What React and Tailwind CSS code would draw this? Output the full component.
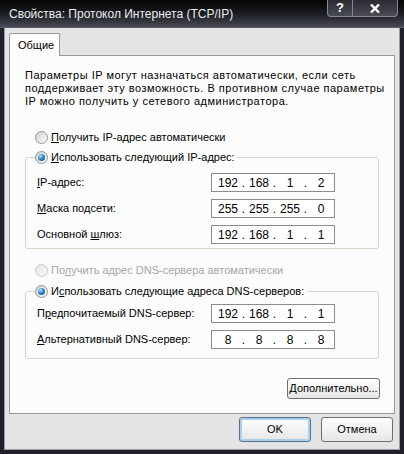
import React from 'react';

const Radio = ({ checked, disabled }) => (
  <span
    className={
      disabled
        ? 'w-[13px] h-[13px] shrink-0 rounded-full border border-[#c8c8c8] bg-linear-to-br from-[#e6e6e6] to-[#fbfbfb]'
        : 'w-[13px] h-[13px] shrink-0 rounded-full border border-[#8a949c] bg-linear-to-br from-[#cfcfcf] to-[#ffffff] flex items-center justify-center'
    }
  >
    {checked && (
      <span className="w-[7px] h-[7px] rounded-full bg-[radial-gradient(circle_at_35%_30%,#b5e2fb,#3b86c6_45%,#163f72)]" />
    )}
  </span>
);

const IpBox = ({ parts }) => (
  <div className="w-[124px] h-[19px] border border-[#8a8c8e] bg-white flex items-center pl-[3px] text-[12px] text-black">
    {parts.map((p, i) => (
      <React.Fragment key={i}>
        <span className="w-[26px] text-center">{p}</span>
        {i < 3 && <span className="w-[5px] text-center">.</span>}
      </React.Fragment>
    ))}
  </div>
);

const Row = ({ label, parts }) => (
  <div className="h-[19px] flex items-center">
    <span className="w-[185px] pl-[11px]">{label}</span>
    <IpBox parts={parts} />
  </div>
);

const Button = ({ children, focus, className }) => (
  <button
    className={
      (focus
        ? 'border border-[#5a6f86] shadow-[inset_0_0_0_2px_#a9d0ec] '
        : 'border border-[#707070] ') +
      'rounded-[3px] bg-linear-to-b from-[#fefefe] to-[#e6e6e6] text-black text-[11px] flex items-center justify-center ' +
      className
    }
  >
    {children}
  </button>
);

export default function App() {
  return (
    <div className="w-[404px] h-[454px] flex flex-col bg-[#1f2029] font-['Liberation_Sans',sans-serif] text-[11px] text-black overflow-hidden">
      {/* title bar */}
      <div className="h-[28px] shrink-0 relative flex items-center pl-[9px] bg-linear-to-b from-[#050505] via-[#1c1d22] to-[#474a53] border-b border-[#5b5e68]">
        <span className="text-[#ececec] text-[12px]">Свойства: Протокол Интернета (TCP/IP)</span>
        <div className="absolute right-[6px] top-0 flex h-[17px] border border-t-0 border-[#868995] rounded-b-[4px] bg-linear-to-b from-[#2a2b31] to-[#4a4c55] overflow-hidden">
          <span className="w-[25px] flex items-center justify-center text-white font-bold text-[13px] border-r border-[#868995]">?</span>
          <span className="w-[44px] flex items-center justify-center">
            <svg width="10" height="9" viewBox="0 0 10 9">
              <path d="M1 0.5 L9 8.5 M9 0.5 L1 8.5" stroke="#ffffff" strokeWidth="2.4" />
            </svg>
          </span>
        </div>
      </div>

      {/* body */}
      <div className="flex-1 mx-[4px] mb-[4px] bg-[#e4e4e4] flex flex-col px-[5px] pt-[5px] shadow-[inset_1px_0_0_#9a9ca4,inset_-1px_0_0_#9a9ca4,inset_0_-1px_0_#9a9ca4]">
        {/* tab */}
        <div className="flex">
          <div className="h-[23px] w-[51px] -mb-px relative z-10 bg-[#fcfcfc] border border-b-0 border-[#919b9c] rounded-t-[2px] flex items-center pl-[8px]">
            Общие
          </div>
        </div>

        {/* panel */}
        <div className="h-[359px] border border-[#919b9c] bg-[#fcfcfc] flex flex-col px-[15px]">
          <p className="mt-[13px] leading-[13px] whitespace-nowrap tracking-[0.5px]">
            Параметры IP могут назначаться автоматически, если сеть
            <br />
            поддерживает эту возможность. В противном случае параметры
            <br />
            IP можно получить у сетевого администратора.
          </p>

          <div className="mt-[21px] h-[16px] flex items-center gap-[3px] pl-[10px]">
            <Radio />
            <span>
              <u>П</u>олучить IP-адрес автоматически
            </span>
          </div>

          <fieldset className="mt-[4px] border border-[#d5d5c8] rounded-[3px] pb-[4px]">
            <legend className="ml-[9px] pr-[3px] h-[16px] flex items-center gap-[3px]">
              <Radio checked />
              <span>
                <u>И</u>спользовать следующий IP-адрес:
              </span>
            </legend>
            <div className="flex flex-col gap-[7px] pt-[8px]">
              <Row label={<><u>I</u>P-адрес:</>} parts={['192', '168', '1', '2']} />
              <Row label={<><u>М</u>аска подсети:</>} parts={['255', '255', '255', '0']} />
              <Row label={<>Основной <u>ш</u>люз:</>} parts={['192', '168', '1', '1']} />
            </div>
          </fieldset>

          <div className="mt-[13px] h-[16px] flex items-center gap-[3px] pl-[10px] text-[#a7a7a7]">
            <Radio disabled />
            <span>
              По<u>л</u>учить адрес DNS-сервера автоматически
            </span>
          </div>

          <fieldset className="mt-[5px] border border-[#d5d5c8] rounded-[3px] pb-[9px]">
            <legend className="ml-[9px] pr-[3px] h-[16px] flex items-center gap-[3px]">
              <Radio checked />
              <span>
                И<u>с</u>пользовать следующие адреса DNS-серверов:
              </span>
            </legend>
            <div className="flex flex-col gap-[7px] pt-[5px]">
              <Row label={<>П<u>р</u>едпочитаемый DNS-сервер:</>} parts={['192', '168', '1', '1']} />
              <Row label={<><u>А</u>льтернативный DNS-сервер:</>} parts={['8', '8', '8', '8']} />
            </div>
          </fieldset>

          <div className="mt-[19px] flex justify-end -mr-[1px]">
            <Button className="w-[93px] h-[21px]">
              <span>
                <u>Д</u>ополнительно...
              </span>
            </Button>
          </div>
        </div>

        {/* bottom buttons */}
        <div className="mt-[3px] flex justify-end gap-[10px] pr-[2px]">
          <Button focus className="w-[72px] h-[25px]">
            OK
          </Button>
          <Button className="w-[72px] h-[25px]">Отмена</Button>
        </div>
      </div>
    </div>
  );
}
